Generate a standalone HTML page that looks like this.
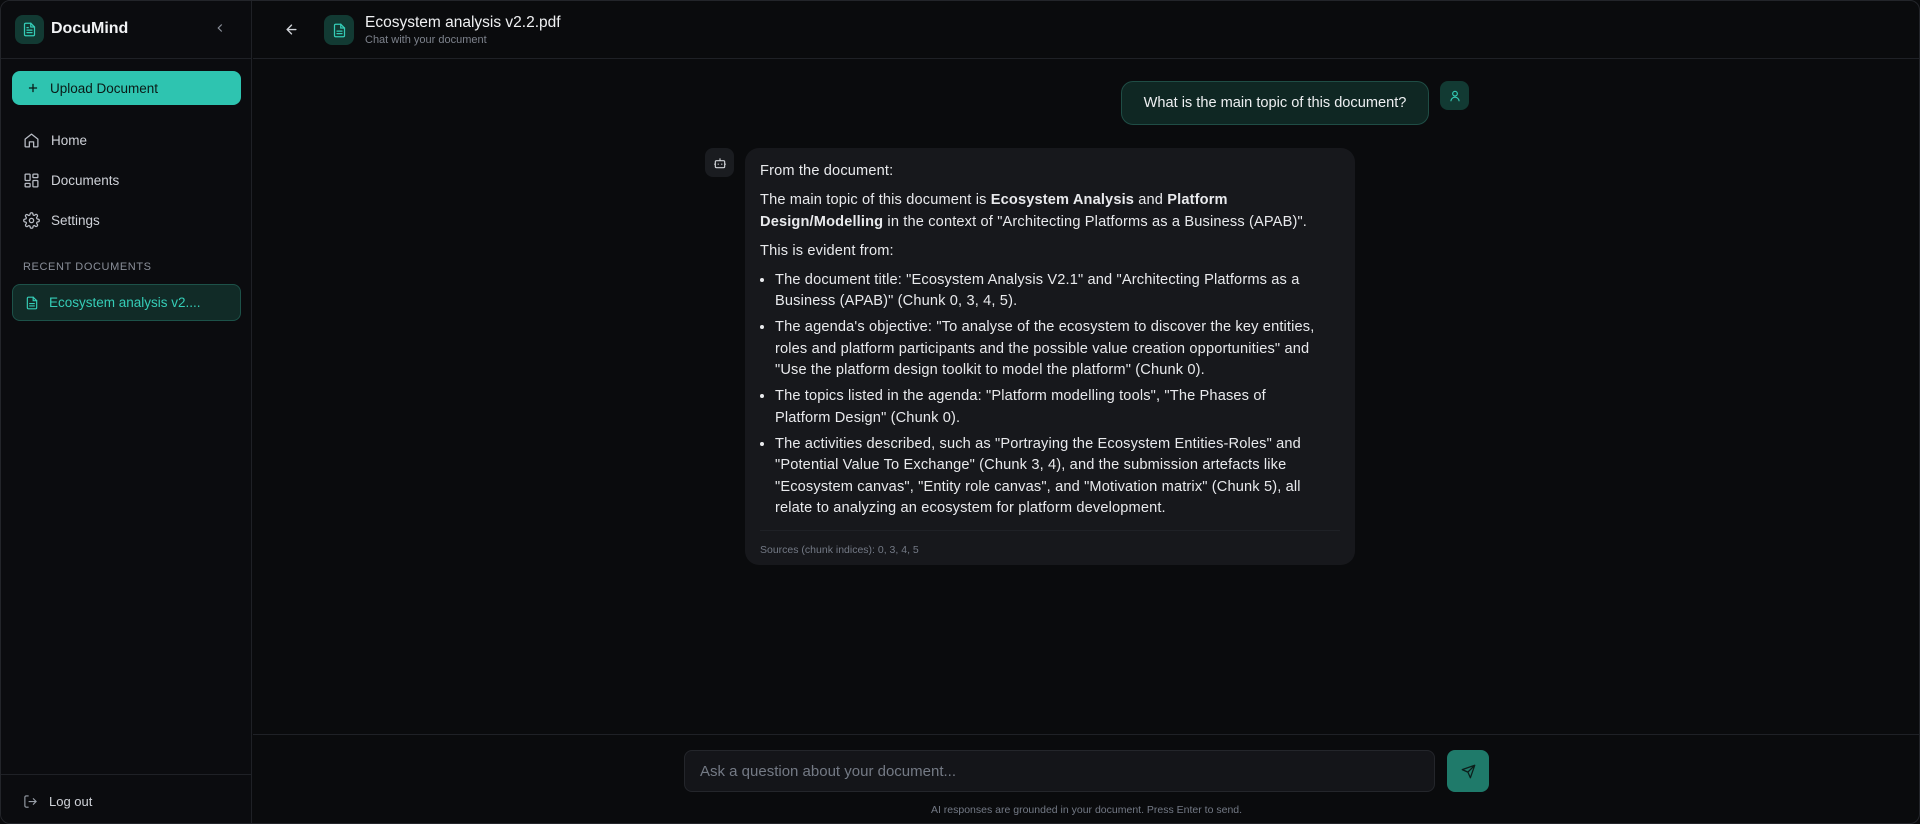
<!DOCTYPE html>
<html><head><meta charset="utf-8"><style>
*{box-sizing:border-box;margin:0;padding:0}
html,body{width:1920px;height:824px;overflow:hidden;background:#0a0b0d;font-family:"Liberation Sans",sans-serif;color:#e6e7ea}
.win{position:absolute;left:0;top:0;width:1920px;height:824px;border:1px solid #23252a;border-radius:10px;overflow:hidden;background:#0a0b0d}
.side{position:absolute;left:0;top:0;width:251px;height:824px;border-right:1px solid #1f2126;background:#0b0c0f}
.sh{height:58px;border-bottom:1px solid #1f2126;position:relative}
.logo{position:absolute;left:14px;top:14px;width:29px;height:29px;border-radius:8px;background:#123a33;display:flex;align-items:center;justify-content:center}
.brand{position:absolute;left:50px;top:19px;font-size:16px;font-weight:bold;color:#f2f3f5}
.chev{position:absolute;left:212px;top:20px}
.up{position:absolute;left:11px;top:70px;width:229px;height:34px;border-radius:8px;background:#2ec4b0;color:#0a1a17;font-size:13.5px;display:flex;align-items:center;padding-left:14px}
.up span{margin-left:10px}
.nav{position:absolute;left:22px;font-size:13.5px;color:#cfd2d8;display:flex;align-items:center}
.nav svg{margin-right:11px}
.rec{position:absolute;left:22px;top:260px;font-size:11px;letter-spacing:.6px;color:#8a8f99}
.ri{position:absolute;left:11px;top:283px;width:229px;height:37px;border-radius:8px;background:#112b27;border:1px solid #1d5249;color:#35cdb7;font-size:13.5px;display:flex;align-items:center;padding-left:12px}
.ri svg{margin-right:10px}
.sb{position:absolute;left:0;top:773px;width:251px;border-top:1px solid #1f2126;height:51px}
.main{position:absolute;left:252px;top:0;right:0;height:824px}
.mh{height:58px;border-bottom:1px solid #1f2126;position:relative}
.dic{position:absolute;left:71px;top:14px;width:30px;height:30px;border-radius:8px;background:#123a33;display:flex;align-items:center;justify-content:center}
.tt{position:absolute;left:112px;top:13px;font-size:15.5px;color:#f0f1f3}
.st{position:absolute;left:112px;top:33px;font-size:11px;color:#7d828c}
.ub{position:absolute;left:868px;top:80px;width:308px;height:44px;border-radius:12px;background:#0f2723;border:1px solid #1f4d45;font-size:14.6px;display:flex;align-items:center;justify-content:center;color:#eef0f2}
.ua{position:absolute;left:1187px;top:80px;width:29px;height:29px;border-radius:8px;background:#123a33;display:flex;align-items:center;justify-content:center}
.ba{position:absolute;left:452px;top:147px;width:29px;height:29px;border-radius:8px;background:#1a1c20;display:flex;align-items:center;justify-content:center}
.bb{position:absolute;left:492px;top:147px;width:610px;height:417px;border-radius:14px;background:#17181c;padding:13px 15px;font-size:14.6px;line-height:21.5px;color:#e9eaed;letter-spacing:.15px}
.bb p{margin-bottom:7.5px}
.bb li{margin-bottom:4.5px}
.bb ul{padding-left:15px;margin-left:0}
.src{position:absolute;left:15px;right:15px;top:382px;border-top:1px solid #1f2126;padding-top:9px;font-size:10.5px;color:#737985;letter-spacing:0}
.foot{position:absolute;left:0;right:0;top:733px;height:91px;border-top:1px solid #1f2126}
.inp{position:absolute;left:431px;top:15px;width:751px;height:42px;border-radius:8px;background:#141519;border:1px solid #24262b;font-size:15px;color:#747a85;display:flex;align-items:center;padding-left:15px}
.snd{position:absolute;left:1194px;top:15px;width:42px;height:42px;border-radius:8px;background:#1f7a6a;display:flex;align-items:center;justify-content:center}
.hint{position:absolute;left:431px;width:805px;top:69px;text-align:center;font-size:10.5px;color:#737985}
</style></head><body><div class="win">
<div class="side">
 <div class="sh">
  <div class="logo"><svg width="15" height="15" viewBox="0 0 24 24" fill="none" stroke="#35cdb7" stroke-width="2" stroke-linecap="round" stroke-linejoin="round"><path d="M14 2H6a2 2 0 0 0-2 2v16a2 2 0 0 0 2 2h12a2 2 0 0 0 2-2V8z"/><path d="M14 2v6h6M16 13H8M16 17H8M10 9H8"/></svg></div>
  <div class="brand">DocuMind</div>
  <svg class="chev" width="14" height="14" viewBox="0 0 24 24" fill="none" stroke="#8a8f99" stroke-width="2"><path d="M15 18l-6-6 6-6"/></svg>
 </div>
 <div class="up"><svg width="14" height="14" viewBox="0 0 24 24" fill="none" stroke="#0a1a17" stroke-width="2.2"><path d="M12 5v14M5 12h14"/></svg><span>Upload Document</span></div>
 <div class="nav" style="top:131px"><svg width="17" height="17" viewBox="0 0 24 24" fill="none" stroke="#b8bcc4" stroke-width="1.8" stroke-linejoin="round"><path d="M3 10l9-7 9 7v10a1 1 0 0 1-1 1h-5v-7H9v7H4a1 1 0 0 1-1-1z"/></svg>Home</div>
 <div class="nav" style="top:171px"><svg width="17" height="17" viewBox="0 0 24 24" fill="none" stroke="#b8bcc4" stroke-width="1.8"><rect x="3" y="3" width="7" height="9" rx="1"/><rect x="14" y="3" width="7" height="5" rx="1"/><rect x="14" y="12" width="7" height="9" rx="1"/><rect x="3" y="16" width="7" height="5" rx="1"/></svg>Documents</div>
 <div class="nav" style="top:211px"><svg width="17" height="17" viewBox="0 0 24 24" fill="none" stroke="#b8bcc4" stroke-width="1.8"><circle cx="12" cy="12" r="3"/><path d="M19.4 15a1.7 1.7 0 0 0 .3 1.8l.1.1a2 2 0 1 1-2.8 2.8l-.1-.1a1.7 1.7 0 0 0-1.8-.3 1.7 1.7 0 0 0-1 1.5V21a2 2 0 1 1-4 0v-.1a1.7 1.7 0 0 0-1.1-1.5 1.7 1.7 0 0 0-1.8.3l-.1.1a2 2 0 1 1-2.8-2.8l.1-.1a1.7 1.7 0 0 0 .3-1.8 1.7 1.7 0 0 0-1.5-1H3a2 2 0 1 1 0-4h.1a1.7 1.7 0 0 0 1.5-1.1 1.7 1.7 0 0 0-.3-1.8l-.1-.1a2 2 0 1 1 2.8-2.8l.1.1a1.7 1.7 0 0 0 1.8.3H9a1.7 1.7 0 0 0 1-1.5V3a2 2 0 1 1 4 0v.1a1.7 1.7 0 0 0 1 1.5 1.7 1.7 0 0 0 1.8-.3l.1-.1a2 2 0 1 1 2.8 2.8l-.1.1a1.7 1.7 0 0 0-.3 1.8V9a1.7 1.7 0 0 0 1.5 1H21a2 2 0 1 1 0 4h-.1a1.7 1.7 0 0 0-1.5 1z"/></svg>Settings</div>
 <div class="rec">RECENT DOCUMENTS</div>
 <div class="ri"><svg width="14" height="14" viewBox="0 0 24 24" fill="none" stroke="#35cdb7" stroke-width="2" stroke-linecap="round"><path d="M14 2H6a2 2 0 0 0-2 2v16a2 2 0 0 0 2 2h12a2 2 0 0 0 2-2V8z"/><path d="M14 2v6h6M16 13H8M16 17H8"/></svg>Ecosystem analysis v2....</div>
 <div class="sb"><div class="nav" style="top:19px;font-size:13px"><svg width="15" height="15" viewBox="0 0 24 24" fill="none" stroke="#9aa0a9" stroke-width="1.8"><path d="M9 21H5a2 2 0 0 1-2-2V5a2 2 0 0 1 2-2h4M16 17l5-5-5-5M21 12H9"/></svg>Log out</div></div>
</div>
<div class="main">
 <div class="mh">
  <svg style="position:absolute;left:31px;top:21px" width="15" height="15" viewBox="0 0 24 24" fill="none" stroke="#d0d3d8" stroke-width="2.2" stroke-linecap="round"><path d="M19 12H5M12 19l-7-7 7-7"/></svg>
  <div class="dic"><svg width="15" height="15" viewBox="0 0 24 24" fill="none" stroke="#35cdb7" stroke-width="2" stroke-linecap="round"><path d="M14 2H6a2 2 0 0 0-2 2v16a2 2 0 0 0 2 2h12a2 2 0 0 0 2-2V8z"/><path d="M14 2v6h6M16 13H8M16 17H8"/></svg></div>
  <div class="tt">Ecosystem analysis v2.2.pdf</div>
  <div class="st">Chat with your document</div>
 </div>
 <div class="ub">What is the main topic of this document?</div>
 <div class="ua"><svg width="14" height="14" viewBox="0 0 24 24" fill="none" stroke="#35cdb7" stroke-width="2"><circle cx="12" cy="8" r="4"/><path d="M5 21a7 7 0 0 1 14 0"/></svg></div>
 <div class="ba"><svg width="14" height="14" viewBox="0 0 24 24" fill="none" stroke="#d0d3d8" stroke-width="2"><rect x="4" y="8" width="16" height="12" rx="2"/><path d="M12 8V4M9 13v2M15 13v2M2 14h2M20 14h2"/></svg></div>
 <div class="bb">
  <p>From the document:</p>
  <p>The main topic of this document is <b>Ecosystem Analysis</b> and <b>Platform<br>Design/Modelling</b> in the context of "Architecting Platforms as a Business (APAB)".</p>
  <p>This is evident from:</p>
  <ul>
   <li>The document title: "Ecosystem Analysis V2.1" and "Architecting Platforms as a<br>Business (APAB)" (Chunk 0, 3, 4, 5).</li>
   <li>The agenda's objective: "To analyse of the ecosystem to discover the key entities,<br>roles and platform participants and the possible value creation opportunities" and<br>"Use the platform design toolkit to model the platform" (Chunk 0).</li>
   <li>The topics listed in the agenda: "Platform modelling tools", "The Phases of<br>Platform Design" (Chunk 0).</li>
   <li>The activities described, such as "Portraying the Ecosystem Entities-Roles" and<br>"Potential Value To Exchange" (Chunk 3, 4), and the submission artefacts like<br>"Ecosystem canvas", "Entity role canvas", and "Motivation matrix" (Chunk 5), all<br>relate to analyzing an ecosystem for platform development.</li>
  </ul>
  <div class="src">Sources (chunk indices): 0, 3, 4, 5</div>
 </div>
 <div class="foot">
  <div class="inp">Ask a question about your document...</div>
  <div class="snd"><svg width="15" height="15" viewBox="0 0 24 24" fill="none" stroke="#0c1f1b" stroke-width="2" stroke-linejoin="round"><path d="M22 2L11 13M22 2l-7 20-4-9-9-4z"/></svg></div>
  <div class="hint">AI responses are grounded in your document. Press Enter to send.</div>
 </div>
</div>
</div></body></html>
